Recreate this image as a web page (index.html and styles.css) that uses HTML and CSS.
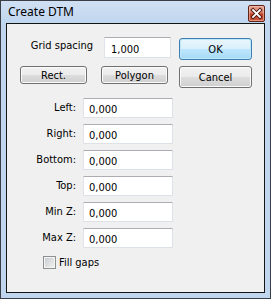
FILE: index.html
```html
<!DOCTYPE html>
<html>
<head>
<meta charset="utf-8">
<link rel="stylesheet" href="styles.css">
</head>
<body>
<div class="window">
  <div class="titlebar">
    <span class="title">Create DTM</span>
    <div class="close">
      <svg width="17" height="17" viewBox="0 0 17 17">
        <path d="M5 5 L12 12 M12 5 L5 12" stroke="#4a140c" stroke-width="3.6" stroke-linecap="square" fill="none"/>
        <path d="M5 5 L12 12 M12 5 L5 12" stroke="#ffffff" stroke-width="1.8" stroke-linecap="square" fill="none"/>
      </svg>
    </div>
  </div>
  <div class="client">
    <div class="top">
      <div class="left">
        <div class="gs-row">
          <span class="gs-label">Grid spacing</span>
          <div class="field gs-field">1,000</div>
        </div>
        <div class="btn-row">
          <div class="btn small">Rect.</div>
          <div class="btn small">Polygon</div>
        </div>
      </div>
      <div class="right">
        <div class="btn big default">OK</div>
        <div class="btn big cancel">Cancel</div>
      </div>
    </div>
    <div class="form">
      <div class="row"><span class="lbl">Left:</span><div class="field">0,000</div></div>
      <div class="row"><span class="lbl">Right:</span><div class="field">0,000</div></div>
      <div class="row"><span class="lbl">Bottom:</span><div class="field">0,000</div></div>
      <div class="row"><span class="lbl">Top:</span><div class="field">0,000</div></div>
      <div class="row"><span class="lbl">Min Z:</span><div class="field">0,000</div></div>
      <div class="row"><span class="lbl">Max Z:</span><div class="field">0,000</div></div>
    </div>
    <div class="check-row">
      <span class="checkbox"></span><span class="check-lbl">Fill gaps</span>
    </div>
  </div>
</div>
</body>
</html>
```

FILE: styles.css
```css
html, body {
  margin: 0;
  padding: 0;
  background: #ffffff;
}
body {
  width: 271px;
  height: 299px;
  overflow: hidden;
  font-family: "DejaVu Sans Condensed", "DejaVu Sans", sans-serif;
  font-size: 11px;
  color: #000;
}
.window {
  box-sizing: border-box;
  width: 271px;
  height: 299px;
  border: 1px solid #3a3f47;
  background: #c0d6ef;
  display: flex;
  flex-direction: column;
  padding: 0 5px 5px 5px;
}
.titlebar {
  height: 22px;
  flex: none;
  display: flex;
  justify-content: space-between;
  align-items: flex-start;
  background: linear-gradient(#d0e0f4, #c0d6ef);
  margin: 0 -5px;
  padding: 0 5px;
}
.title {
  font-family: "Noto Sans", "Open Sans", sans-serif;
  font-size: 12px;
  line-height: 22px;
  padding-left: 2px;
  color: #000;
}
.close {
  margin-top: 4px;
  width: 17px;
  height: 17px;
  box-sizing: border-box;
  border: 1px solid #5e2418;
  border-radius: 2px;
  background: linear-gradient(#e6a593 0%, #d57a64 45%, #bf3f25 55%, #cc5a3e 100%);
  box-shadow: inset 0 0 0 1px rgba(255, 210, 195, 0.5);
  display: flex;
  align-items: center;
  justify-content: center;
}
.close svg {
  display: block;
  margin: -1px;
}
.client {
  flex: 1;
  border: 1px solid #141414;
  background: #f0f0f0;
}
.top {
  display: flex;
  padding-top: 13px;
}
.left {
  width: 164px;
}
.gs-row {
  display: flex;
  align-items: flex-start;
  height: 21px;
}
.gs-label {
  width: 86px;
  text-align: right;
  line-height: 13px;
  padding-top: 2px;
}
.field {
  box-sizing: border-box;
  width: 90px;
  height: 20px;
  background: #fff;
  border: 1px solid #dde2e8;
  border-top-color: #abadb3;
  border-left-color: #e2e3ea;
  padding: 2px 0 0 5px;
  line-height: 17px;
}
.gs-field {
  margin-left: 11px;
  width: 67px;
  height: 21px;
  padding-top: 3px;
  padding-left: 6px;
}
.btn-row {
  display: flex;
  gap: 14px;
  margin-top: 8px;
  padding-left: 13px;
}
.btn {
  box-sizing: border-box;
  border: 1px solid #707070;
  border-radius: 3px;
  background: linear-gradient(#f2f2f2 0%, #ebebeb 50%, #dddddd 50%, #cfcfcf 100%);
  box-shadow: inset 0 0 0 1px #fbfbfb;
  display: flex;
  align-items: center;
  justify-content: center;
}
.small {
  width: 67px;
  height: 18px;
}
.right {
  margin-left: 8px;
  padding-top: 1px;
  display: flex;
  flex-direction: column;
}
.big {
  width: 73px;
  height: 22px;
}
.default {
  border-color: #3c7fb1;
  background: linear-gradient(#eaf6fd 0%, #d9f0fc 50%, #bee6fd 50%, #a7d9f5 100%);
  box-shadow: inset 0 0 0 1px #bfe6f9;
}
.cancel {
  margin-top: 6px;
}
.form {
  margin-top: 10px;
  display: flex;
  flex-direction: column;
  gap: 6px;
}
.row {
  display: flex;
  align-items: flex-start;
  height: 20px;
}
.lbl {
  width: 69px;
  text-align: right;
  margin-right: 7px;
  line-height: 13px;
  padding-top: 3px;
}
.check-row {
  display: flex;
  align-items: center;
  margin-top: 8px;
  padding-left: 36px;
  height: 13px;
}
.checkbox {
  box-sizing: border-box;
  width: 13px;
  height: 13px;
  border: 1px solid #8e8f8f;
  background: linear-gradient(135deg, #c4c8ce 0%, #f4f4f4 100%);
  box-shadow: inset 0 0 0 1px #f4f4f4;
}
.check-lbl {
  margin-left: 3px;
  line-height: 13px;
}
```
